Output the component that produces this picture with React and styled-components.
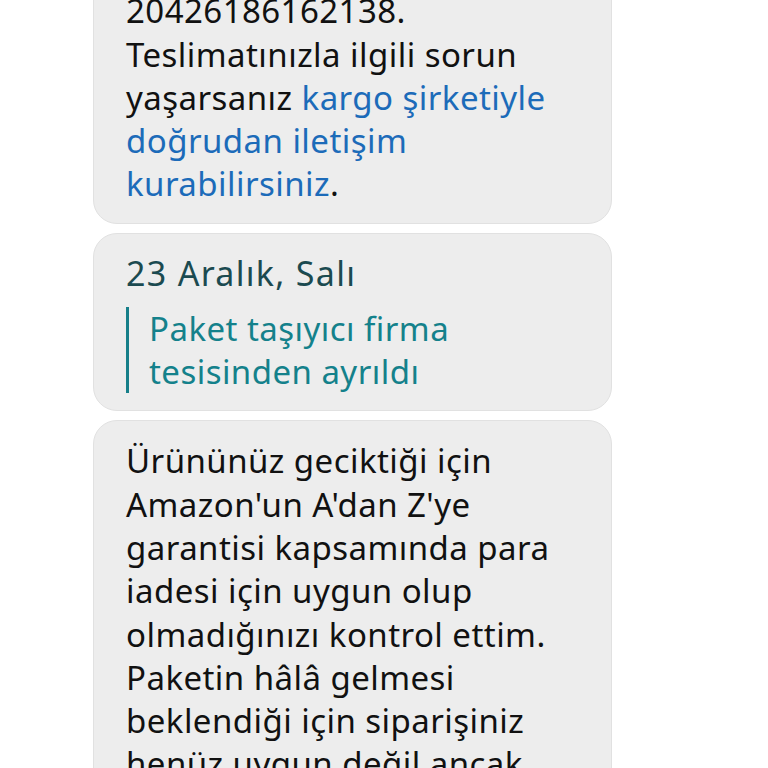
import React from 'react'
import styled, { createGlobalStyle } from 'styled-components'

const GlobalStyle = createGlobalStyle`
    html, body {
        margin: 0;
        padding: 0;
        background: #ffffff;
        overflow: hidden;
    }
    body {
        font-family: "Noto Sans", "Open Sans", sans-serif;
        -webkit-font-smoothing: antialiased;
    }
`

function App() {
    return (
        <>
            <GlobalStyle />
            <Thread>
                <Bubble>
                    <Text>
                        Kargo takip numaranız 20426186162138. Teslimatınızla ilgili sorun
                        yaşarsanız <Link href="#">kargo şirketiyle doğrudan iletişim kurabilirsiniz</Link>.
                    </Text>
                </Bubble>
                <Bubble>
                    <DateLine>23 Aralık, Salı</DateLine>
                    <Status>Paket taşıyıcı firma tesisinden ayrıldı</Status>
                </Bubble>
                <Bubble>
                    <Text>
                        Ürününüz geciktiği için Amazon'un A'dan Z'ye garantisi kapsamında para
                        iadesi için uygun olup olmadığınızı kontrol ettim. Paketin hâlâ gelmesi
                        beklendiği için siparişiniz henüz uygun değil ancak paketiniz gelmezse
                        tekrar bize ulaşabilirsiniz.
                    </Text>
                </Bubble>
            </Thread>
        </>
    )
}

export default App

const Thread = styled.div`
    display: flex;
    flex-direction: column;
    gap: 10px;
    width: 519px;
    margin: -73px 0 0 93px;
`

const Bubble = styled.div`
    background: #ededed;
    border: 1px solid #e1e1e1;
    border-radius: 24px;
    padding: 18px 28px 17px 32px;

    & + & {
        margin-top: -1px;
    }
`

const Text = styled.p`
    margin: 0;
    font-size: 33px;
    line-height: 43.3px;
    letter-spacing: 0.45px;
    color: #111111;
`

const Link = styled.a`
    color: #1c6bb9;
    text-decoration: none;
`

const DateLine = styled.div`
    font-size: 34px;
    line-height: 43px;
    letter-spacing: 1.3px;
    color: #1b4a50;
`

const Status = styled.div`
    margin-top: 12px;
    border-left: 3px solid #167f89;
    padding-left: 20px;
    font-size: 33px;
    line-height: 43.3px;
    letter-spacing: 0.45px;
    color: #14818b;
`
